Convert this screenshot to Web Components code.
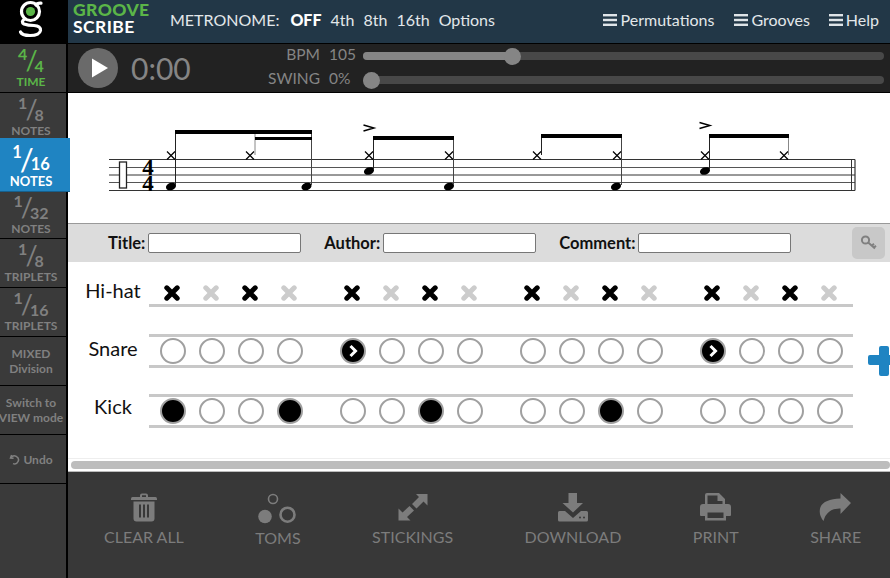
<!DOCTYPE html>
<html>
<head>
<meta charset="utf-8">
<style>
  html, body { margin: 0; padding: 0; }
  body { width: 890px; height: 578px; overflow: hidden; font-family: Lato, "Open Sans", sans-serif; }
</style>
</head>
<body>
<groove-app></groove-app>
<script>
class GrooveApp extends HTMLElement {
  constructor() {
    super();
    this.shadowDOM = this.attachShadow({ mode: 'open' });
  }
  connectedCallback() {
    this.shadowDOM.innerHTML = `
      <style>
        :host { display: flex; width: 890px; height: 578px; overflow: hidden; background: #fff; }
        main { flex: 1; min-width: 0; display: flex; flex-direction: column; }
      </style>
      <left-bar></left-bar>
      <main>
        <top-bar></top-bar>
        <transport-bar></transport-bar>
        <staff-view></staff-view>
        <meta-bar></meta-bar>
        <voice-grid></voice-grid>
        <action-bar></action-bar>
      </main>`;
  }
}

class LeftBar extends HTMLElement {
  constructor() {
    super();
    this.shadowDOM = this.attachShadow({ mode: 'open' });
  }
  connectedCallback() {
    this.shadowDOM.innerHTML = `
      <style>
        :host { display: flex; flex-direction: column; width: 66px; flex: none; background: #3a3a3a; border-right: 2px solid #000; }
        .logo { height: 44px; width: 68px; background: #000; flex: none; }
        .logo svg { display: block; }
      </style>
      <div class="logo">
        <svg width="68" height="44" viewBox="0 0 68 44">
          <g fill="none" stroke="#fff" stroke-width="3.2" stroke-linecap="round">
            <circle cx="30.5" cy="11.5" r="9"/>
            <path d="M36 5 Q37 3 41 3.2"/>
            <path d="M24.5 19 Q20.5 22 24 24 Q28 25.5 34 25.5 Q41 26 40.5 30.5 Q39.5 35.5 30 35.5 Q22 35.5 20.5 32"/>
          </g>
          <circle cx="30.5" cy="11.5" r="4.6" fill="#5bb548"/>
        </svg>
      </div>
      <note-division top="4" bottom="4" label="TIME" kind="time"></note-division>
      <note-division top="1" bottom="8" label="NOTES" kind="before"></note-division>
      <note-division top="1" bottom="16" label="NOTES" kind="active"></note-division>
      <note-division top="1" bottom="32" label="NOTES" kind="after"></note-division>
      <note-division top="1" bottom="8" label="TRIPLETS"></note-division>
      <note-division top="1" bottom="16" label="TRIPLETS"></note-division>
      <side-button first="MIXED" second="Division"></side-button>
      <side-button first="Switch to" second="VIEW mode"></side-button>
      <side-button undo first="Undo"></side-button>`;
  }
}

class NoteDivision extends HTMLElement {
  constructor() {
    super();
    this.shadowDOM = this.attachShadow({ mode: 'open' });
  }
  connectedCallback() {
    this.shadowDOM.innerHTML = `
      <style>
        :host { display: block; box-sizing: border-box; height: 49px; width: 66px; border-bottom: 1px solid #000; color: #808080; font-weight: 700; text-align: center; padding-right: 4px; flex: none; }
        :host([kind="before"]) { height: 45px; border-bottom: 0; }
        :host([kind="after"]) { height: 47px; }
        :host([kind="after"]) .frac { height: 30px; padding-top: 0; }
        :host([kind="time"]) { color: #5bb548; }
        :host([kind="active"]) { position: relative; z-index: 2; width: 70px; height: 54px; background: #1f84c2; color: #fff; border-bottom: 1px solid #16608e; padding-right: 8px; }
        .frac { display: flex; justify-content: center; box-sizing: border-box; height: 31px; padding-top: 1px; font-size: 16px; line-height: 18px; white-space: nowrap; }
        .frac i { font-style: normal; font-weight: 400; font-size: 27px; line-height: 28px; margin: 0 -3px 0 -2px; transform: translateY(1px); }
        .frac .t { align-self: flex-start; }
        .frac .b { align-self: flex-end; }
        .lab { display: block; font-size: 12px; line-height: 14px; }
        :host([kind="active"]) .frac { height: 36px; padding-top: 4px; font-size: 16.5px; line-height: 20px; }
        :host([kind="active"]) .frac i { font-size: 31px; line-height: 32px; }
        :host([kind="active"]) .lab { font-size: 13px; }
      </style>
      <span class="frac"><span class="t">${this.getAttribute('top')}</span><i>/</i><span class="b">${this.getAttribute('bottom')}</span></span>
      <span class="lab">${this.getAttribute('label')}</span>`;
  }
}

class SideButton extends HTMLElement {
  constructor() {
    super();
    this.shadowDOM = this.attachShadow({ mode: 'open' });
  }
  connectedCallback() {
    const undo = this.hasAttribute('undo');
    const second = this.getAttribute('second');
    this.shadowDOM.innerHTML = `
      <style>
        :host { display: flex; flex-direction: column; align-items: center; justify-content: center; box-sizing: border-box; height: 49px; width: 66px; padding-right: 4px; border-bottom: 1px solid #000; color: #808080; font-weight: 700; font-size: 12px; line-height: 15px; white-space: nowrap; flex: none; }
        .u { display: flex; align-items: center; gap: 3px; }
      </style>
      ${undo ? `<span class="u"><svg width="11" height="11" viewBox="0 0 11 11" fill="none" stroke="#808080" stroke-width="1.5"><path d="M2.6 1 L1.5 4 L4.6 4.2"/><path d="M2 3.8 A4 4 0 1 1 4 9.6"/></svg>${this.getAttribute('first')}</span>`
             : `<span>${this.getAttribute('first')}</span><span>${second}</span>`}`;
  }
}

class TopBar extends HTMLElement {
  constructor() {
    super();
    this.shadowDOM = this.attachShadow({ mode: 'open' });
  }
  connectedCallback() {
    const bars = '<svg width="14" height="12" viewBox="0 0 14 12" fill="#dfe4e8"><rect y="0" width="14" height="2.4"/><rect y="4.8" width="14" height="2.4"/><rect y="9.6" width="14" height="2.4"/></svg>';
    this.shadowDOM.innerHTML = `
      <style>
        :host { display: flex; align-items: center; box-sizing: border-box; height: 44px; flex: none; padding-bottom: 4px; background: #223747; border-bottom: 1px solid #000; color: #e3e7ea; font-size: 16px; white-space: nowrap; overflow: hidden; }
        .brand { width: 97px; margin: -3px 0 0 5px; font-weight: 700; font-size: 17.5px; line-height: 17px; letter-spacing: .4px; color: #fff; }
        .brand b { display: block; color: #5bb548; }
        .metro { display: flex; gap: 9px; }
        .metro .off { color: #fff; font-weight: 900; margin-left: 2px; }
        .menus { margin-left: auto; margin-right: 11px; display: flex; gap: 19px; }
        .menus span { display: flex; align-items: center; gap: 3px; }
        .menus span:first-child { gap: 4px; margin-right: 1px; }
      </style>
      <div class="brand"><b>GROOVE</b>SCRIBE</div>
      <div class="metro"><span>METRONOME:</span><span class="off">OFF</span><span>4th</span><span>8th</span><span>16th</span><span>Options</span></div>
      <div class="menus"><span>${bars}Permutations</span><span>${bars}Grooves</span><span>${bars}Help</span></div>`;
  }
}

class TransportBar extends HTMLElement {
  constructor() {
    super();
    this.shadowDOM = this.attachShadow({ mode: 'open' });
  }
  connectedCallback() {
    this.shadowDOM.innerHTML = `
      <style>
        :host { display: flex; align-items: center; box-sizing: border-box; height: 49px; flex: none; background: #222; border-bottom: 1px solid #000; color: #858585; }
        .play { width: 40px; height: 40px; margin-left: 10px; border-radius: 50%; background: #6a6a6a; flex: none; }
        .play svg { display: block; }
        .clock { width: 136px; margin-left: 13px; font-size: 30px; line-height: 40px; flex: none; }
        .sliders { flex: 1; display: flex; flex-direction: column; gap: 4px; }
      </style>
      <div class="play"><svg width="40" height="40" viewBox="0 0 40 40"><path d="M14 10.5 L30 20 L14 29.5 Z" fill="#fff"/></svg></div>
      <div class="clock">0:00</div>
      <div class="sliders">
        <tempo-slider label="BPM" value="105" percent="28.6"></tempo-slider>
        <tempo-slider label="SWING" value="0%" percent="0"></tempo-slider>
      </div>`;
  }
}

class TempoSlider extends HTMLElement {
  constructor() {
    super();
    this.shadowDOM = this.attachShadow({ mode: 'open' });
  }
  connectedCallback() {
    const percent = this.getAttribute('percent');
    this.shadowDOM.innerHTML = `
      <style>
        :host { display: flex; align-items: center; height: 20px; font-size: 15.5px; white-space: nowrap; }
        .lab { width: 53px; text-align: right; flex: none; margin-top: -5px; }
        .val { width: 34px; margin: -5px 0 0 9px; flex: none; }
        .track { position: relative; width: 521px; height: 8px; border-radius: 4px; background: #484848; flex: none; }
        .fill { height: 8px; border-radius: 4px; background: #858585; width: ${percent}%; }
        .thumb { position: absolute; top: -4.5px; left: calc(${percent}% - ${percent === '0' ? 0 : 8.5}px); width: 17px; height: 17px; border-radius: 50%; background: #858585; }
      </style>
      <span class="lab">${this.getAttribute('label')}</span>
      <span class="val">${this.getAttribute('value')}</span>
      <div class="track"><div class="fill"></div><div class="thumb"></div></div>`;
  }
}

class StaffView extends HTMLElement {
  constructor() {
    super();
    this.shadowDOM = this.attachShadow({ mode: 'open' });
  }
  hat(x) {
    const y = 155.5;
    return `<path d="M${x - 4} ${y - 4} L${x + 4} ${y + 4} M${x + 4} ${y - 4} L${x - 4} ${y + 4}" stroke="#000" stroke-width="1.2" fill="none"/>`;
  }
  head(x, y) {
    return `<ellipse cx="${x}" cy="${y}" rx="5.2" ry="3.6" transform="rotate(-20 ${x} ${y})" fill="#000"/>`;
  }
  stem(x, y1, y2, color) {
    return `<line x1="${x}" x2="${x}" y1="${y1}" y2="${y2}" stroke="${color || '#222'}" stroke-width="1"/>`;
  }
  beam(x1, x2, y, h) {
    return `<rect x="${x1}" y="${y}" width="${x2 - x1}" height="${h}" fill="#000"/>`;
  }
  accent(x, y) {
    return `<path d="M${x - 5.5} ${y - 3} L${x + 5} ${y} L${x - 5.5} ${y + 3}" fill="none" stroke="#000" stroke-width="1.4"/>`;
  }
  connectedCallback() {
    const lines = [159.5, 167.5, 175, 182.5, 190.5].map((y, i) =>
      `<line x1="109" x2="855" y1="${y}" y2="${y}" stroke="${i % 2 ? '#555' : '#333'}" stroke-width="1"/>`).join('');
    this.shadowDOM.innerHTML = `
      <style>
        :host { display: block; height: 130px; flex: none; background: #fff; }
        svg { display: block; }
        text { font-family: "Liberation Serif", serif; font-weight: 700; font-size: 23px; fill: #000; }
      </style>
      <svg width="822" height="130" viewBox="68 93 822 130">
        ${lines}
        <rect x="119.5" y="162" width="7" height="26" fill="#fff" stroke="#222" stroke-width="1.3"/>
        <text x="148" y="175" text-anchor="middle">4</text>
        <text x="148" y="190.5" text-anchor="middle">4</text>
        <line x1="851.5" x2="851.5" y1="159.5" y2="190.5" stroke="#333"/>
        <line x1="855" x2="855" y1="159.5" y2="190.5" stroke="#333" stroke-width="1.2"/>

        ${this.hat(171)}${this.hat(250)}
        ${this.head(171, 186.5)}${this.head(306.5, 186.5)}
        ${this.stem(175.5, 131, 185)}${this.stem(255, 134, 155, '#888')}${this.stem(311.5, 131, 185, '#444')}
        ${this.beam(175, 312, 130, 4)}${this.beam(255, 312, 137, 3)}

        ${this.accent(369, 128)}
        ${this.hat(369)}${this.hat(449)}
        ${this.head(369, 171)}${this.head(449, 186.5)}
        ${this.stem(373.5, 137, 170)}${this.stem(453.5, 137, 185, '#444')}
        ${this.beam(373, 454, 136, 4)}

        ${this.hat(537)}${this.hat(617)}
        ${this.head(616, 186.5)}
        ${this.stem(541.5, 134, 155)}${this.stem(621.5, 134, 185, '#444')}
        ${this.beam(541, 622, 134, 4)}

        ${this.accent(705, 125.5)}
        ${this.hat(705)}${this.hat(784)}
        ${this.head(705, 171)}
        ${this.stem(709.5, 134, 170)}${this.stem(788.5, 134, 155, '#888')}
        ${this.beam(709, 789, 134, 4)}
      </svg>`;
  }
}

class MetaBar extends HTMLElement {
  constructor() {
    super();
    this.shadowDOM = this.attachShadow({ mode: 'open' });
  }
  connectedCallback() {
    this.shadowDOM.innerHTML = `
      <style>
        :host { display: flex; align-items: center; box-sizing: border-box; height: 39px; flex: none; background: #dcdcdc; border-top: 1px solid #999; color: #111; font-weight: 700; font-size: 16.5px; padding-left: 40px; }
        label { display: flex; align-items: center; gap: 3px; margin-right: 23px; }
        .box { display: block; box-sizing: border-box; width: 153px; height: 20px; background: #fff; border: 1px solid #777; border-radius: 2px; }
        .key { width: 33px; height: 32px; margin-left: 61px; border-radius: 5px; background: #c8c8c8; display: flex; align-items: center; justify-content: center; }
      </style>
      <label>Title:<span class="box"></span></label>
      <label>Author:<span class="box"></span></label>
      <label style="margin-right:0">Comment:<span class="box"></span></label>
      <div class="key">
        <svg width="18" height="16" viewBox="0 0 18 16" fill="none" stroke="#808080" stroke-width="2">
          <circle cx="5.5" cy="5" r="3.6"/>
          <path d="M8.2 7.5 L15 13.5 M12 10.5 L14 8.8 M14 12.4 L16 10.8"/>
        </svg>
      </div>`;
  }
}

class VoiceGrid extends HTMLElement {
  constructor() {
    super();
    this.shadowDOM = this.attachShadow({ mode: 'open' });
  }
  connectedCallback() {
    this.shadowDOM.innerHTML = `
      <style>
        :host { display: flex; flex-direction: column; position: relative; box-sizing: border-box; height: 210px; flex: none; background: #fff; padding-top: 12px; overflow: hidden; }
        .rows { display: flex; flex-direction: column; gap: 26px; }
        .plus { position: absolute; left: 800px; top: 82px; width: 32px; height: 32px; }
        .scroll { margin-top: auto; border-top: 1px solid #eee; padding: 2px 0 2px 3px; height: 8px; }
        .scroll div { height: 8px; border-radius: 4px; background: #bdbdbd; }
        .edge { height: 1px; background: #bbb; }
      </style>
      <div class="rows">
        <voice-row label="Hi-hat" kind="hat" lift="-1" pattern="x-x-x-x-x-x-x-x-"></voice-row>
        <voice-row label="Snare" kind="drum" lift="-3" pattern="----a-------a---"></voice-row>
        <voice-row label="Kick" kind="drum" lift="-5" pattern="o--o--o---o-----"></voice-row>
      </div>
      <svg class="plus" viewBox="0 0 32 32"><path d="M13 2 Q11 2 11 4 V11 H2 Q0 11 0 13 V19 Q0 21 2 21 H11 V30 Q11 32 13 32 H19 Q21 32 21 30 V21 H30 Q32 21 32 19 V13 Q32 11 30 11 H21 V4 Q21 2 19 2 Z" fill="#1f84c2"/></svg>
      <div class="scroll"><div></div></div>
      <div class="edge"></div>`;
  }
}

class VoiceRow extends HTMLElement {
  constructor() {
    super();
    this.shadowDOM = this.attachShadow({ mode: 'open' });
  }
  cell(ch) {
    if (this.getAttribute('kind') === 'hat') {
      const color = ch === 'x' ? '#000' : '#ccc';
      return `<span class="c"><svg width="16" height="16" viewBox="0 0 16 16"><path d="M2.8 2.8 L13.2 13.2 M13.2 2.8 L2.8 13.2" stroke="${color}" stroke-width="5" stroke-linecap="round"/></svg></span>`;
    }
    if (ch === 'a') {
      return `<span class="c"><span class="o on"><svg width="22" height="22" viewBox="0 0 22 22"><path d="M8.5 6 L13.5 11 L8.5 16" fill="none" stroke="#fff" stroke-width="3"/></svg></span></span>`;
    }
    return `<span class="c"><span class="o ${ch === 'o' ? 'on' : ''}"></span></span>`;
  }
  connectedCallback() {
    const notes = this.getAttribute('pattern').split('');
    let groups = '';
    for (let i = 0; i < 16; i += 4) {
      groups += `<div class="g">${notes.slice(i, i + 4).map((n) => this.cell(n)).join('')}</div>`;
    }
    this.shadowDOM.innerHTML = `
      <style>
        :host { display: flex; align-items: flex-start; height: 34px; }
        .name { box-sizing: border-box; width: 81px; padding-left: 9px; text-align: center; flex: none; font-size: 20px; line-height: 28px; color: #111; margin-top: ${Number(this.getAttribute('lift')) + 3}px; }
        .track { box-sizing: border-box; display: flex; gap: 24px; width: 704px; height: 34px; padding-left: 4.5px; border-top: 3px solid #c8c8c8; border-bottom: 3px solid #c8c8c8; }
        :host([kind="hat"]) .track { border-top-color: transparent; height: 33px; }
        .g { display: flex; }
        .c { display: flex; align-items: center; justify-content: center; width: 39px; height: 28px; }
        .c svg { display: block; }
        .o { display: block; box-sizing: border-box; width: 26px; height: 26px; border-radius: 50%; border: 2px solid #a0a0a0; background: #fff; }
        .o.on { background: #000; display: flex; align-items: center; justify-content: center; }
        :host([kind="hat"]) .c { box-sizing: border-box; padding: 3px 1.5px 0 0; }
      </style>
      <div class="name">${this.getAttribute('label')}</div>
      <div class="track">${groups}</div>`;
  }
}

class ActionBar extends HTMLElement {
  constructor() {
    super();
    this.shadowDOM = this.attachShadow({ mode: 'open' });
  }
  connectedCallback() {
    const c = '#7c7c7c';
    this.shadowDOM.innerHTML = `
      <style>
        :host { display: flex; flex: 1; gap: 71.5px; box-sizing: border-box; background: #383838; padding: 20px 0 0 36px; }
      </style>
      <action-item label="CLEAR ALL"><svg width="26" height="30" viewBox="0 0 26 30" fill="${c}"><path d="M9 3.5 Q9 1.5 11 1.5 H15 Q17 1.5 17 3.5 V5 H24.5 Q26 5 26 7 V8 H0 V7 Q0 5 1.5 5 H9 Z M11 3.2 V5 H15 V3.2 Z" fill-rule="evenodd"/><path d="M2.5 9.5 H23.5 V26.5 Q23.5 29.5 20.5 29.5 H5.5 Q2.5 29.5 2.5 26.5 Z M8 12.5 V25.5 H10 V12.5 Z M12 12.5 V25.5 H14 V12.5 Z M16 12.5 V25.5 H18 V12.5 Z" fill-rule="evenodd"/></svg></action-item>
      <action-item label="TOMS" nudge><svg width="39" height="32" viewBox="0 0 39 32" style="margin-bottom:-1px"><circle cx="15" cy="7" r="4.5" fill="none" stroke="${c}" stroke-width="1.6"/><circle cx="7" cy="24.5" r="6.8" fill="${c}"/><circle cx="29.5" cy="22.7" r="7" fill="none" stroke="${c}" stroke-width="2.6"/></svg></action-item>
      <action-item label="STICKINGS"><svg width="30" height="28" viewBox="0 0 30 28" fill="${c}"><path d="M18 1 H29.5 V12.5 L25.5 8.5 L18.5 15.5 L14 11 L21 4 Z"/><path d="M0.5 15.5 L4.5 19.5 L11.5 13 L16 17.5 L9 24 L12.5 27.5 H0.5 Z"/></svg></action-item>
      <action-item label="DOWNLOAD"><svg width="30" height="29" viewBox="0 0 30 29" fill="${c}"><path d="M10.5 0 H19 V10 H25 L15 19.5 L4.5 10 H10.5 Z"/><path d="M1.5 18 H7 L15 25 L23 18 H28.5 Q30 18 30 19.5 V27 Q30 28.5 28.5 28.5 H1.5 Q0 28.5 0 27 V19.5 Q0 18 1.5 18 Z"/><circle cx="22" cy="24.5" r="1" fill="#383838"/><circle cx="26" cy="24.5" r="1" fill="#383838"/></svg></action-item>
      <action-item label="PRINT"><svg width="31" height="28" viewBox="0 0 31 28" fill="${c}" fill-rule="evenodd"><path d="M5 2 Q5 0 7 0 H19 L25 6 V13 H5 Z M7.5 2.5 V11 H22.5 V8 H17.5 V2.5 Z"/><path d="M3 11 H28 Q31 11 31 14 V22 Q31 23 30 23 H26 V27.5 H5 V23 H1 Q0 23 0 22 V14 Q0 11 3 11 Z M7.5 19.5 V25 H23.5 V19.5 Z"/></svg></action-item>
      <action-item label="SHARE"><svg width="33" height="30" viewBox="0 0 33 30" fill="${c}"><path d="M21.5 1 L32 11 L21.5 22 V16.5 Q8 16 4.5 29 Q-1 22 1.5 15 Q5 7 21.5 6.5 Z"/></svg></action-item>`;
  }
}

class ActionItem extends HTMLElement {
  constructor() {
    super();
    this.shadowDOM = this.attachShadow({ mode: 'open' });
  }
  connectedCallback() {
    this.shadowDOM.innerHTML = `
      <style>
        :host { display: flex; flex-direction: column; align-items: center; color: #7c7c7c; font-size: 16px; white-space: nowrap; }
        .ico { display: flex; align-items: center; justify-content: center; height: 30px; margin-bottom: 5px; }
        :host([nudge]) .ico { margin-bottom: 6px; }
        ::slotted(svg) { display: block; }
      </style>
      <div class="ico"><slot></slot></div>
      <span>${this.getAttribute('label')}</span>`;
  }
}

customElements.define('note-division', NoteDivision);
customElements.define('side-button', SideButton);
customElements.define('left-bar', LeftBar);
customElements.define('top-bar', TopBar);
customElements.define('tempo-slider', TempoSlider);
customElements.define('transport-bar', TransportBar);
customElements.define('staff-view', StaffView);
customElements.define('meta-bar', MetaBar);
customElements.define('voice-row', VoiceRow);
customElements.define('voice-grid', VoiceGrid);
customElements.define('action-item', ActionItem);
customElements.define('action-bar', ActionBar);
customElements.define('groove-app', GrooveApp);
</script>
</body>
</html>
